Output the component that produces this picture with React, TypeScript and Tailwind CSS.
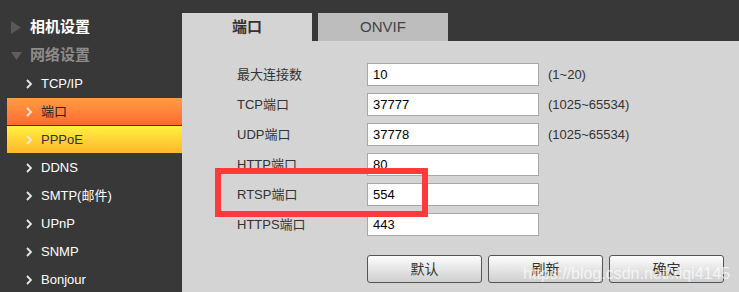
import type { ReactElement } from "react";

const SIDE_ITEMS = ["TCP/IP", "端口", "PPPoE", "DDNS", "SMTP(邮件)", "UPnP", "SNMP", "Bonjour"];

const FIELDS = [
  { label: "最大连接数", value: "10", range: "(1~20)" },
  { label: "TCP端口", value: "37777", range: "(1025~65534)" },
  { label: "UDP端口", value: "37778", range: "(1025~65534)" },
  { label: "HTTP端口", value: "80", range: "" },
  { label: "RTSP端口", value: "554", range: "" },
  { label: "HTTPS端口", value: "443", range: "" },
];

const FONT = "font-['Liberation_Sans','Noto_Sans_CJK_SC',sans-serif]";

const Chevron = (): ReactElement => (
  <svg width="7" height="10" viewBox="0 0 7 10" className="mr-[8px] shrink-0">
    <path d="M1 1 L5 5 L1 9" fill="none" stroke="#e8e8e8" strokeWidth="1.8" />
  </svg>
);

const SideItem = ({ name }: { name: string }): ReactElement => {
  let band = "";
  let text = "text-white";
  if (name === "端口") {
    band = "bg-gradient-to-b from-[#ff9c42] to-[#ff6a33]";
    text = "text-[#222]";
  } else if (name === "PPPoE") {
    band = "bg-gradient-to-b from-[#fff23e] to-[#ffb62c]";
    text = "text-[#333]";
  }
  return (
    <div className={`ml-[7px] flex h-[27px] items-center pl-[19px] text-[13px] ${band} ${text}`}>
      <Chevron />
      <span>{name}</span>
    </div>
  );
};

const Sidebar = (): ReactElement => (
  <div className="w-[182px] shrink-0 bg-[#383838] pt-[15px]">
    <div className="flex h-[25px] items-center pl-[11px]">
      <svg width="10" height="13" viewBox="0 0 10 13" className="mr-[9px]">
        <path d="M0 0 L10 6.5 L0 13 Z" fill="#585858" />
      </svg>
      <span className="text-[15px] font-bold text-white">相机设置</span>
    </div>
    <div className="mt-[3px] flex h-[25px] items-center pl-[11px]">
      <svg width="11" height="8" viewBox="0 0 11 8" className="mr-[8px]">
        <path d="M0 0 L11 0 L5.5 8 Z" fill="#5e5e5e" />
      </svg>
      <span className="text-[15px] font-bold text-[#8c8c8c]">网络设置</span>
    </div>
    <div className="mt-[2px] flex flex-col gap-[1px]">
      {SIDE_ITEMS.map((n) => (
        <SideItem key={n} name={n} />
      ))}
    </div>
  </div>
);

const Button = ({ label }: { label: string }): ReactElement => (
  <div className="flex h-[28px] w-[115px] items-center justify-center rounded-[3px] border border-[#555] bg-gradient-to-b from-[#fdfdfd] to-[#cfcfcf] text-[14px] text-[#333]">
    {label}
  </div>
);

export default function App(): ReactElement {
  return (
    <div className={`relative flex h-[292px] w-[739px] overflow-hidden bg-[#383838] ${FONT}`}>
      <Sidebar />
      <div className="flex flex-1 flex-col pt-[13px]">
        <div className="flex h-[28px] gap-[6px]">
          <div className="flex w-[130px] items-center justify-center bg-[#d4d4d4] text-[15px] font-bold text-[#333]">
            端口
          </div>
          <div className="flex w-[130px] items-center justify-center bg-[#bdbdbd] text-[15px] text-[#444]">
            ONVIF
          </div>
        </div>
        <div className="flex-1 bg-[#d4d4d4] pl-[55px] pt-[22px]">
          <div className="flex flex-col gap-[7px]">
            {FIELDS.map((f) => (
              <div key={f.label} className="flex h-[23px] items-center">
                <div className="w-[130px] text-[13px] text-[#333]">{f.label}</div>
                <div className="flex h-[23px] w-[172px] items-center border border-[#a8a8a8] bg-white pl-[5px] text-[13px] text-black">
                  {f.value}
                </div>
                <div className="ml-[9px] text-[13px] text-[#333]">{f.range}</div>
              </div>
            ))}
          </div>
          <div className="ml-[130px] mt-[19px] flex gap-[6px]">
            <Button label="默认" />
            <Button label="刷新" />
            <Button label="确定" />
          </div>
        </div>
      </div>
      <div className="absolute left-[215px] top-[168px] h-[49px] w-[213px] border-[6px] border-[#ff3a3a]" />
      <div className="absolute left-[523px] top-[262px] text-[16px] text-white/70">
        https://blog.csdn.net/xiqi4145
      </div>
    </div>
  );
}
